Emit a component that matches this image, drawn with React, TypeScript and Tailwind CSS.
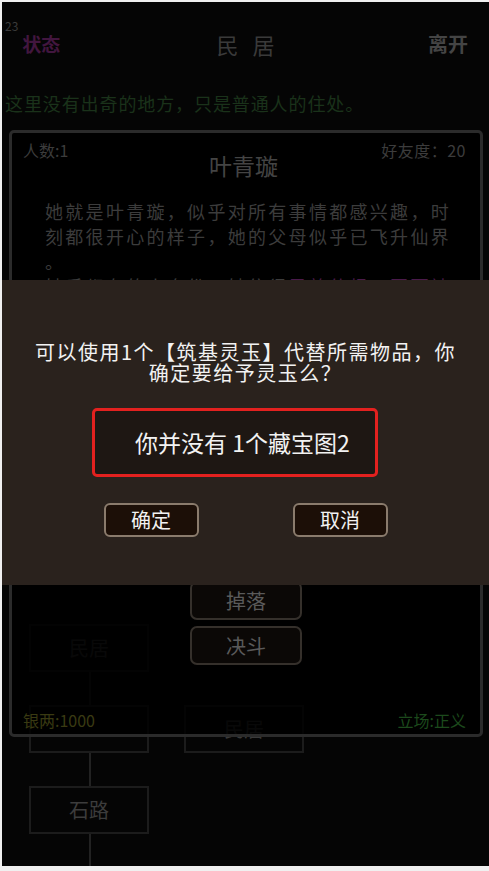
export default function App() {
  return (
    <div className="w-[489px] h-[871px] bg-[#f0f0f0] pl-[2px] pt-[2px] font-['Noto_Sans_CJK_SC','Noto_Sans',sans-serif]">
      <div className="relative w-[487px] h-[864px] bg-[#050505] overflow-hidden">
        {/* Header */}
        <div className="grid grid-cols-[1fr_auto_1fr] h-[80px] pt-[17px]">
          <div className="flex items-start">
            <div className="pl-[3px] text-[12px] leading-[14px] text-[#3a3a3a]">23</div>
            <div className="mt-[13px] ml-[4px] text-[19px] leading-[24px] font-bold text-[#42163f]">状态</div>
          </div>
          <div className="mt-[11px] flex gap-[14px] text-[22px] leading-[28px] text-[#3a3a3a]">
            <span>民</span>
            <span>居</span>
          </div>
          <div className="flex justify-end pr-[21px]">
            <div className="mt-[13px] text-[20px] leading-[24px] font-bold text-[#444]">离开</div>
          </div>
        </div>
        <div className="mt-[9px] pl-[3px] text-[18px] leading-[24px] tracking-[0.9px] text-[#1a321a]">
          这里没有出奇的地方，只是普通人的住处。
        </div>

        {/* Map nodes (behind panel) */}
        <div className="absolute left-[27px] top-[622px] w-[120px] h-[48px] border-[2px] border-[#1a1a1a] flex items-center justify-center text-[20px] text-[#3a3a3a]">民居</div>
        <div className="absolute left-[87px] top-[670px] w-[2px] h-[33px] bg-[#1e1e1e]" />
        <div className="absolute left-[27px] top-[703px] w-[120px] h-[48px] border-[2px] border-[#1c1c1c]" />
        <div className="absolute left-[182px] top-[703px] w-[120px] h-[48px] border-[2px] border-[#1c1c1c] flex items-center justify-center text-[20px] text-[#3a3a3a]">民居</div>
        <div className="absolute left-[87px] top-[751px] w-[2px] h-[33px] bg-[#222]" />
        <div className="absolute left-[27px] top-[784px] w-[120px] h-[48px] border-[2px] border-[#1c1c1c] flex items-center justify-center text-[20px] text-[#3c3c3c]">石路</div>
        <div className="absolute left-[87px] top-[832px] w-[2px] h-[40px] bg-[#222]" />

        {/* Panel */}
        <div className="absolute left-[7px] top-[128px] w-[474px] h-[607px] border-[3px] border-[#2b2b2b] rounded-[5px] bg-black/[0.85] flex flex-col">
          <div className="flex items-start justify-between px-[11px] pt-[7px]">
            <div className="w-[120px] text-[16px] leading-[20px] text-[#3c3c3c]">人数:1</div>
            <div className="mt-[11px] text-[23px] leading-[28px] text-[#444]">叶青璇</div>
            <div className="w-[125px] text-right pr-[3px] text-[16px] leading-[20px] tracking-[0.5px] text-[#3c3c3c]">好友度：20</div>
          </div>
          <div className="mt-[20px] pl-[33px] text-[18px] leading-[25px] tracking-[2.3px] text-[#3c3c3c] whitespace-nowrap">
            <div>她就是叶青璇，似乎对所有事情都感兴趣，时</div>
            <div>刻都很开心的样子，她的父母似乎已飞升仙界</div>
            <div>。</div>
            <div>
              她手都有的人身份，她依得<span className="text-[#4a1a4a]">灵韵仙根，因而被</span>
            </div>
          </div>
          <div className="mt-[282px] flex flex-col items-center gap-[6px]">
            <div className="w-[112px] h-[39px] border-[2px] border-[#35302b] rounded-[7px] bg-[#0b0806] flex items-center justify-center text-[20px] text-[#5a5a5a]">掉落</div>
            <div className="w-[112px] h-[39px] border-[2px] border-[#35302b] rounded-[7px] bg-[#0b0806] flex items-center justify-center text-[20px] text-[#5a5a5a]">决斗</div>
          </div>
          <div className="mt-auto flex justify-between px-[11px] pb-[4px] text-[16px] leading-[20px]">
            <div className="text-[#3a3a12]">银两:1000</div>
            <div className="pr-[3px] text-[#1c4a1c]">立场:正义</div>
          </div>
        </div>

        {/* Modal */}
        <div className="absolute left-0 right-0 top-[278px] h-[305px] bg-[#2a221d] flex flex-col items-center pt-[61px]">
          <div className="text-center text-[20px] leading-[21px] tracking-[1.5px] text-[#f2f2f2]">
            <div>可以使用1个【筑基灵玉】代替所需物品，你</div>
            <div>确定要给予灵玉么？</div>
          </div>
          <div className="mt-[25px] self-start ml-[90px] w-[286px] h-[69px] border-[3px] border-[#e3211f] rounded-[5px] bg-[#1e1713] flex items-center pl-[40px] text-[23px] text-[#f2f2f2]">
            你并没有 1个藏宝图2
          </div>
          <div className="mt-[26px] flex gap-[94px]">
            <div className="w-[95px] h-[34px] border-[2px] border-[#8a7b6c] rounded-[6px] bg-[#1c0f07] flex items-center justify-center text-[20px] text-[#f2f2f2]">确定</div>
            <div className="w-[95px] h-[34px] border-[2px] border-[#8a7b6c] rounded-[6px] bg-[#1c0f07] flex items-center justify-center text-[20px] text-[#f2f2f2]">取消</div>
          </div>
        </div>
      </div>
    </div>
  );
}
